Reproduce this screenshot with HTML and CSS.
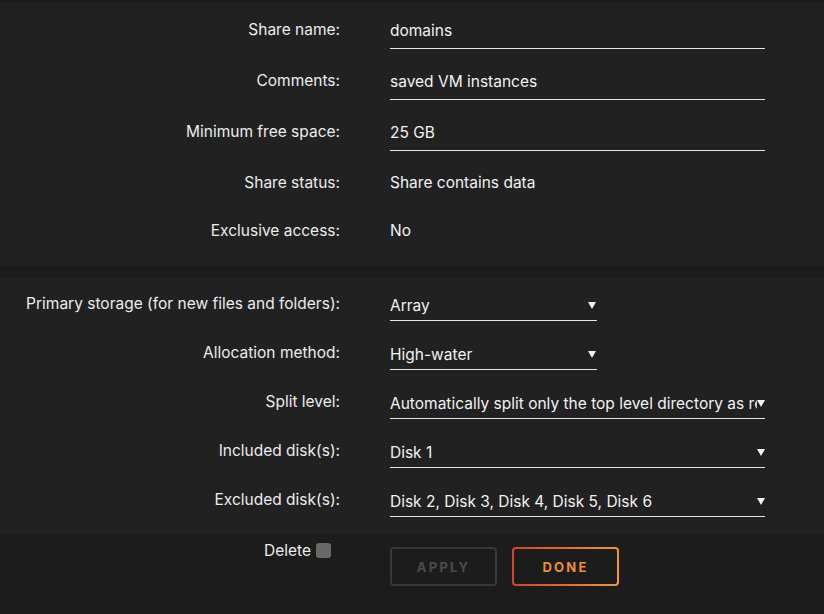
FILE: index.html
```html
<!DOCTYPE html>
<html>
<head>
<meta charset="utf-8">
<link rel="stylesheet" href="styles.css">
</head>
<body>
<div class="page">
  <section class="panel panel-top">
    <div class="row">
      <div class="label">Share name:</div>
      <div class="field field-input wide">domains</div>
    </div>
    <div class="row">
      <div class="label">Comments:</div>
      <div class="field field-input wide">saved VM instances</div>
    </div>
    <div class="row">
      <div class="label">Minimum free space:</div>
      <div class="field field-input wide">25 GB</div>
    </div>
    <div class="row row-text">
      <div class="label">Share status:</div>
      <div class="field field-plain">Share contains data</div>
    </div>
    <div class="row row-text">
      <div class="label">Exclusive access:</div>
      <div class="field field-plain">No</div>
    </div>
  </section>

  <section class="panel panel-bottom">
    <div class="row row-select">
      <div class="label">Primary storage (for new files and folders):</div>
      <div class="field field-select narrow"><span class="sel-text">Array</span><svg class="arrow" width="8" height="7" viewBox="0 0 8 7"><polygon points="0,0 8,0 4,7" fill="#f2f2f2"/></svg></div>
    </div>
    <div class="row row-select">
      <div class="label">Allocation method:</div>
      <div class="field field-select narrow"><span class="sel-text">High-water</span><svg class="arrow" width="8" height="7" viewBox="0 0 8 7"><polygon points="0,0 8,0 4,7" fill="#f2f2f2"/></svg></div>
    </div>
    <div class="row row-select">
      <div class="label">Split level:</div>
      <div class="field field-select wide"><span class="sel-text">Automatically split only the top level directory as required</span><svg class="arrow" width="8" height="7" viewBox="0 0 8 7"><polygon points="0,0 8,0 4,7" fill="#f2f2f2"/></svg></div>
    </div>
    <div class="row row-select">
      <div class="label">Included disk(s):</div>
      <div class="field field-select wide"><span class="sel-text">Disk 1</span><svg class="arrow" width="8" height="7" viewBox="0 0 8 7"><polygon points="0,0 8,0 4,7" fill="#f2f2f2"/></svg></div>
    </div>
    <div class="row row-select">
      <div class="label">Excluded disk(s):</div>
      <div class="field field-select wide"><span class="sel-text">Disk 2, Disk 3, Disk 4, Disk 5, Disk 6</span><svg class="arrow" width="8" height="7" viewBox="0 0 8 7"><polygon points="0,0 8,0 4,7" fill="#f2f2f2"/></svg></div>
    </div>
  </section>

  <section class="actions">
    <div class="delete">
      <span>Delete</span>
      <span class="checkbox"></span>
    </div>
    <div class="buttons">
      <button class="btn btn-apply">APPLY</button>
      <button class="btn btn-done">DONE</button>
    </div>
  </section>
</div>
</body>
</html>
```
FILE: styles.css
```css
html, body {
  margin: 0;
  padding: 0;
  background: #1c1c1c;
}
body {
  font-family: Inter, "Liberation Sans", Arial, sans-serif;
  font-size: 15.5px;
  line-height: 20px;
  color: #f0f0f0;
}
.page {
  width: 824px;
  height: 614px;
  padding-top: 3px;
  box-sizing: border-box;
}
.panel {
  background: #212121;
  display: flex;
  flex-direction: column;
  gap: 21px;
  padding: 16px 0 18px;
}
.panel-bottom {
  margin-top: 12px;
}
.row {
  display: grid;
  grid-template-columns: 340px 1fr;
  column-gap: 50px;
  align-items: start;
}
.row-text {
  min-height: 27px;
}
.label {
  text-align: right;
  white-space: nowrap;
  color: #ececec;
  padding-top: 1px;
}
.field {
  color: #f2f2f2;
  white-space: nowrap;
}
.field-plain {
  padding-top: 1px;
}
.field-input {
  padding-top: 2px;
  padding-bottom: 7px;
  border-bottom: 1px solid #e6e6e6;
}
.field-select {
  display: flex;
  align-items: center;
  padding-top: 3px;
  padding-bottom: 4px;
  border-bottom: 1px solid #e6e6e6;
}
.wide {
  width: 375px;
}
.narrow {
  width: 207px;
}
.narrow .arrow {
  margin-right: 1px;
}
.sel-text {
  flex: 1;
  min-width: 0;
  overflow: hidden;
  white-space: nowrap;
}
.arrow {
  flex: none;
  display: block;
  margin-top: -2px;
}
.actions {
  display: grid;
  grid-template-columns: 340px 1fr;
  column-gap: 50px;
  padding-top: 6px;
}
.delete {
  display: flex;
  justify-content: flex-end;
  align-items: flex-start;
  gap: 5px;
  padding-right: 9px;
  color: #ececec;
}
.checkbox {
  width: 15px;
  height: 15px;
  margin-top: 2px;
  background: #696969;
  border-radius: 3px;
}
.buttons {
  display: flex;
  gap: 15px;
  padding-top: 6px;
}
.btn {
  width: 107px;
  height: 39px;
  box-sizing: border-box;
  border-radius: 4px;
  font-family: Inter, "Liberation Sans", Arial, sans-serif;
  font-weight: bold;
  font-size: 13px;
  letter-spacing: 2.2px;
  padding: 0;
  text-align: center;
}
.btn-apply {
  background: #1c1c1c;
  border: 2px solid #383838;
  color: #4c4c4c;
}
.btn-done {
  border: 2px solid transparent;
  background: linear-gradient(#1c1c1c, #1c1c1c) padding-box, linear-gradient(90deg, #d8402b, #f2962f) border-box;
  color: #ee8f32;
}
```
